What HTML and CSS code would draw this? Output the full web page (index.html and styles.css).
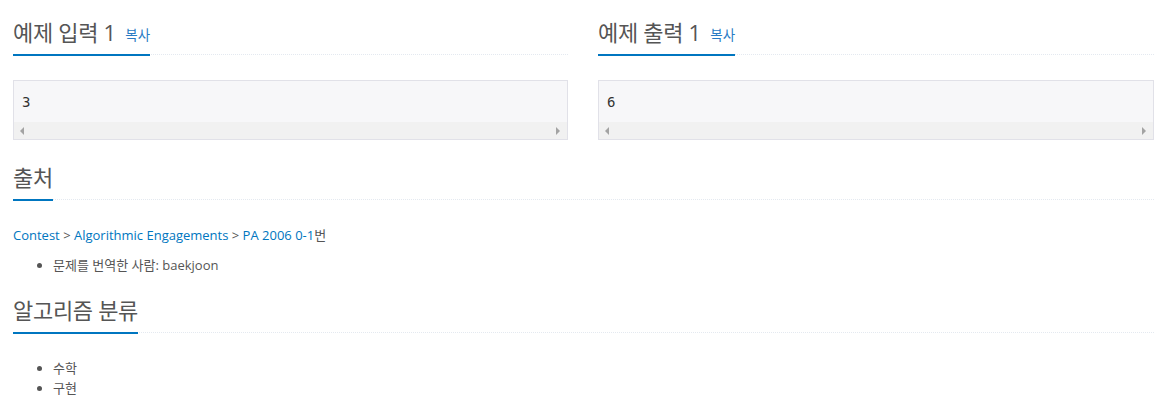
FILE: index.html
```html
<!DOCTYPE html>
<html lang="ko">
<head>
<meta charset="utf-8">
<title>예제</title>
<link rel="stylesheet" href="styles.css">
</head>
<body>
<div class="page">
  <div class="row">
    <section class="col">
      <div class="headline">
        <h2>예제 입력 1 <button type="button" class="copy-button">복사</button></h2>
      </div>
      <div class="sample">
        <pre class="sampledata">3</pre>
        <div class="hscroll"><span class="arrow left"></span><span class="arrow right"></span></div>
      </div>
    </section>
    <section class="col">
      <div class="headline">
        <h2>예제 출력 1 <button type="button" class="copy-button">복사</button></h2>
      </div>
      <div class="sample">
        <pre class="sampledata">6</pre>
        <div class="hscroll"><span class="arrow left"></span><span class="arrow right"></span></div>
      </div>
    </section>
  </div>
  <section class="block">
    <div class="headline">
      <h2>출처</h2>
    </div>
    <p class="source"><a href="#">Contest</a> &gt; <a href="#">Algorithmic Engagements</a> &gt; <a href="#">PA 2006 0-1</a>번</p>
    <ul class="list">
      <li>문제를 번역한 사람: baekjoon</li>
    </ul>
  </section>
  <section class="block">
    <div class="headline">
      <h2>알고리즘 분류</h2>
    </div>
    <ul class="list">
      <li>수학</li>
      <li>구현</li>
    </ul>
  </section>
</div>
</body>
</html>
```

FILE: styles.css
```css
html, body {
  margin: 0;
  padding: 0;
  background: #fff;
}
body {
  font-family: "Open Sans", "Noto Sans CJK KR", sans-serif;
  font-size: 13px;
  line-height: 20px;
  color: #555;
}
.page {
  width: 1141px;
  padding: 6px 13px 0 13px;
}
.row {
  display: grid;
  grid-template-columns: 555px 556px;
  column-gap: 30px;
}
.headline {
  display: flex;
  margin: 10px 0 25px 0;
  border-bottom: 1px dotted #e4e9f0;
}
.headline h2 {
  margin: 0 0 -2px 0;
  padding: 0 0 5px 0;
  border-bottom: 2px solid #0076c0;
  font-size: 22px;
  line-height: 33px;
  font-weight: normal;
  color: #555;
  letter-spacing: -0.3px;
  white-space: nowrap;
}
.copy-button {
  border: 0;
  background: none;
  padding: 0;
  margin: 0 0 0 4px;
  font-family: inherit;
  font-size: 13.5px;
  letter-spacing: 0;
  color: #2a7bc4;
  cursor: pointer;
  vertical-align: 1px;
}
.sample {
  border: 1px solid #e1e1e8;
  background: #f7f7f9;
  margin-bottom: 11px;
}
.sampledata {
  margin: 0;
  padding: 11px 9px 10px 8px;
  font-family: "DejaVu Sans Mono", monospace;
  font-size: 14px;
  line-height: 20px;
  color: #333;
}
.hscroll {
  height: 17px;
  background: #f1f1f1;
  display: flex;
  align-items: center;
  justify-content: space-between;
  padding: 0 7px 0 6px;
}
.arrow {
  width: 0;
  height: 0;
  border-top: 4px solid transparent;
  border-bottom: 4px solid transparent;
}
.arrow.left {
  border-right: 4px solid #a3a3a3;
}
.arrow.right {
  border-left: 4px solid #a3a3a3;
}
.source {
  margin: 0 0 10px 0;
}
.source a {
  color: #0076c0;
  text-decoration: none;
}
.list {
  margin: 0 0 19px 0;
  padding-left: 40px;
}
.list li {
  line-height: 20px;
}
```
